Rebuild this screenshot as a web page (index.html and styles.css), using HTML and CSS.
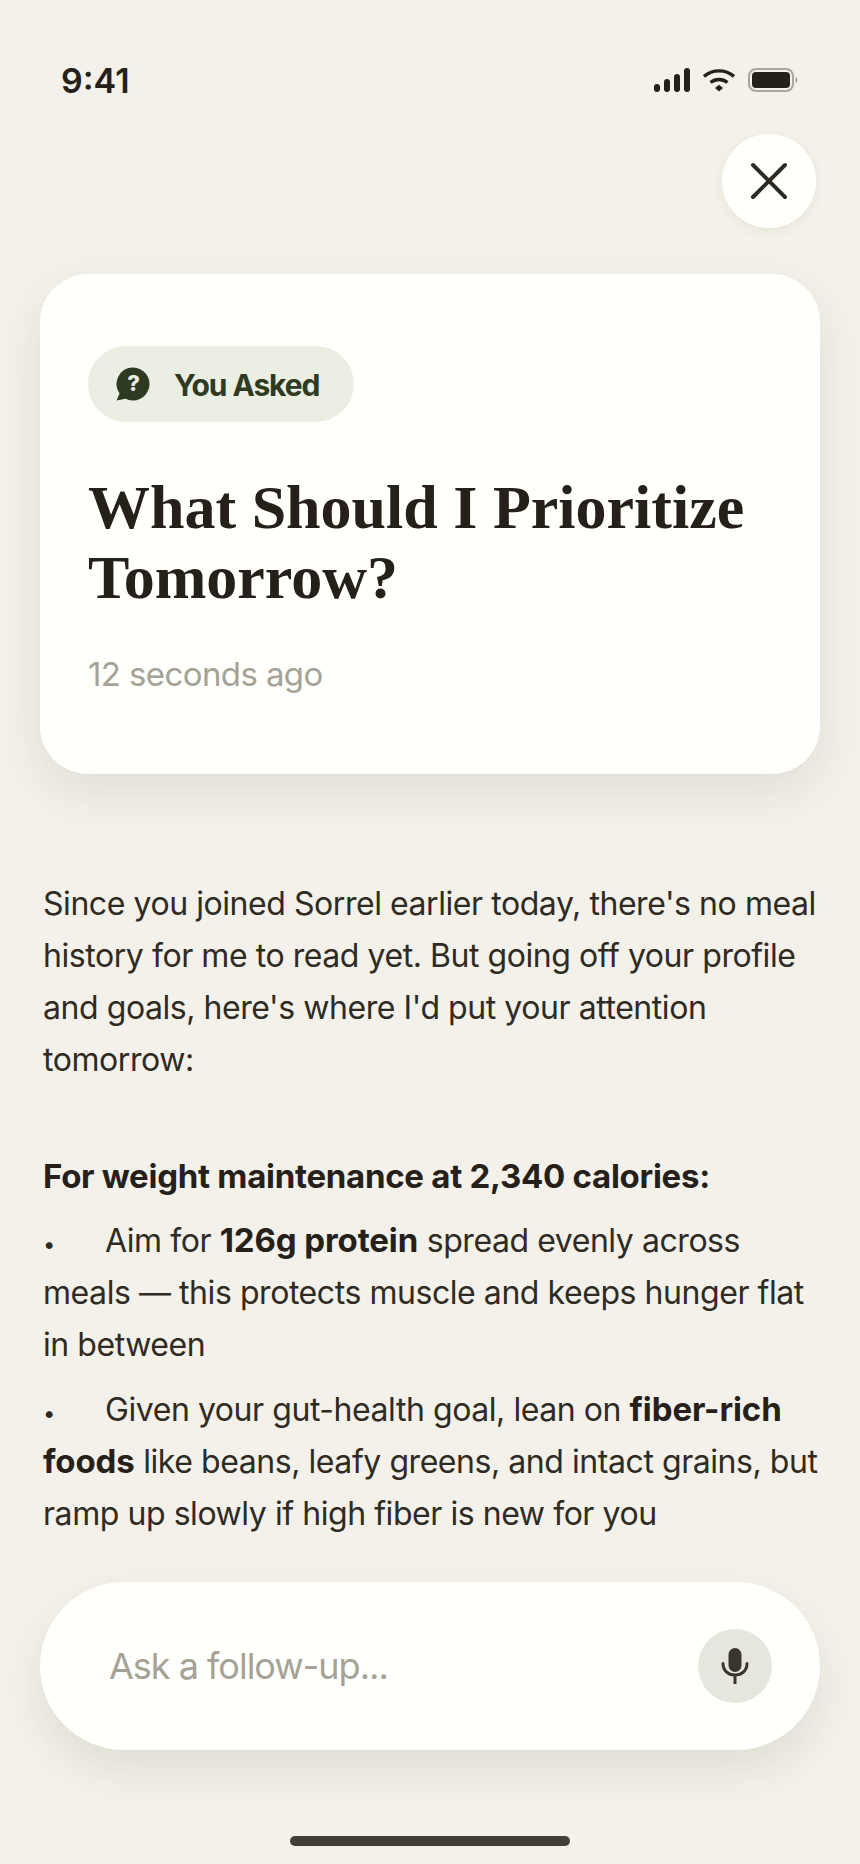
FILE: index.html
```html
<!DOCTYPE html>
<html lang="en">
<head>
  <meta charset="UTF-8" />
  <meta name="viewport" content="width=device-width, initial-scale=1" />
  <title>You Asked</title>
  <link rel="stylesheet" href="styles.css">
</head>
<body>
  <div class="screen">
    <!-- Status bar -->
    <div class="status-bar">
      <span class="time">9:41</span>
      <div class="status-icons">
        <svg class="signal" width="36" height="24" viewBox="0 0 36 24" fill="#25211a">
          <rect x="0" y="16" width="6" height="8" rx="3"/>
          <rect x="10" y="11" width="6" height="13" rx="3"/>
          <rect x="20" y="6" width="6" height="18" rx="3"/>
          <rect x="30" y="0" width="6" height="24" rx="3"/>
        </svg>
        <svg class="wifi" width="32" height="24" viewBox="1 0 32 24" fill="none" stroke="#25211a" stroke-width="3.4">
          <path d="M2 8.500C10.500 1 23.500 1 32 8.500"/>
          <path d="M8.500 14.500C13.500 10.500 20.500 10.500 25.500 14.500"/>
          <path d="M13 20l4-3.200 4 3.200-4 3.500z" fill="#25211a" stroke="none"/>
        </svg>
        <svg class="battery" width="50" height="24" viewBox="0 0 50 24">
          <rect x="1" y="1" width="44" height="22" rx="7" fill="none" stroke="#a9a698" stroke-width="2"/>
          <rect x="4" y="4" width="38" height="16" rx="4" fill="#25211a"/>
          <path d="M47.500 9c1.500.5 2 1.600 2 3s-.5 2.500-2 3z" fill="#a9a698"/>
        </svg>
      </div>
    </div>

    <!-- Close button -->
    <div class="close-row">
      <button class="close-btn" aria-label="Close">
        <svg width="38" height="38" viewBox="0 0 38 38" fill="none" stroke="#2e2b25" stroke-width="4" stroke-linecap="round">
          <path d="M3 3L35 35M35 3L3 35"/>
        </svg>
      </button>
    </div>

    <!-- Question card -->
    <div class="card">
      <div class="chip">
        <svg width="34" height="34" viewBox="0 0 34 34">
          <path d="M17 0.500A16.500 16.500 0 1 1 9.500 31.700L0.500 33.500L3.600 26.500A16.500 16.500 0 0 1 17 0.500Z" fill="#2f3a22"/>
          <text x="17" y="24" text-anchor="middle" class="chip-mark">?</text>
        </svg>
        <span class="chip-label">You Asked</span>
      </div>
      <h1>What Should I Prioritize Tomorrow?</h1>
      <p class="time-ago">12 seconds ago</p>
    </div>

    <!-- Answer -->
    <div class="answer">
      <p>Since you joined Sorrel earlier today, there's no meal history for me to read yet. But going off your profile and goals, here's where I'd put your attention tomorrow:</p>
      <h2>For weight maintenance at 2,340 calories:</h2>
      <p class="bullet"><span class="dot">•</span>Aim for <b>126g protein</b> spread evenly across meals — this protects muscle and keeps hunger flat in between</p>
      <p class="bullet"><span class="dot">•</span>Given your gut-health goal, lean on <b>fiber-rich foods</b> like beans, leafy greens, and intact grains, but ramp up slowly if high fiber is new for you</p>
    </div>

    <!-- Follow-up input -->
    <div class="ask-bar">
      <span class="placeholder">Ask a follow-up...</span>
      <button class="mic-btn" aria-label="Voice">
        <svg width="28" height="36" viewBox="0 0 28 36" fill="none">
          <rect x="7.500" y="0" width="13" height="24" rx="6.500" fill="#3a352c"/>
          <path d="M2 15.500C2 22.500 7 27 14 27s12-4.500 12-11.500M14 27v8" stroke="#3a352c" stroke-width="3" stroke-linecap="round"/>
        </svg>
      </button>
    </div>

    <div class="home-bar"></div>
  </div>
</body>
</html>
```

FILE: styles.css
```css
/* Basic Reset */
* {
  margin: 0;
  padding: 0;
  box-sizing: border-box;
}

body {
  background: #f3f1e9;
  font-family: 'Inter', sans-serif;
  color: #2e2b24;
}

.screen {
  width: 860px;
  height: 1864px;
  display: flex;
  flex-direction: column;
  overflow: hidden;
}

/* Status bar */
.status-bar {
  display: flex;
  align-items: center;
  justify-content: space-between;
  height: 44px;
  margin-top: 58px;
  padding: 0 62px 0 61px;
}

.time {
  font-size: 34px;
  font-weight: 600;
  color: #25211a;
}

.status-icons {
  display: flex;
  align-items: center;
  gap: 13px;
}

/* Close button */
.close-row {
  display: flex;
  justify-content: flex-end;
  padding-right: 44px;
  margin-top: 32px;
}

.close-btn {
  width: 94px;
  height: 94px;
  border: none;
  border-radius: 50%;
  background: #fffffb;
  display: flex;
  align-items: center;
  justify-content: center;
  box-shadow: 0 4px 14px rgba(60, 55, 40, 0.06);
}

/* Question card */
.card {
  width: 780px;
  height: 500px;
  margin: 46px 0 0 40px;
  padding: 72px 48px 0;
  background: #fffffb;
  border-radius: 48px;
  box-shadow: 0 18px 50px rgba(60, 55, 40, 0.1);
}

.chip {
  display: inline-flex;
  align-items: center;
  gap: 24px;
  height: 76px;
  padding: 0 35px 0 28px;
  border-radius: 38px;
  background: #ebeee3;
  color: #2f3a22;
  font-size: 30px;
  font-weight: 700;
  letter-spacing: -1.1px;
}

.chip-label {
  padding-top: 2px;
}

.chip-mark {
  font-family: 'Inter', sans-serif;
  font-size: 22px;
  font-weight: 800;
  fill: #ebeee3;
}

h1 {
  font-family: 'Liberation Serif', serif;
  font-size: 62px;
  font-weight: 700;
  line-height: 70px;
  color: #25211a;
  margin-top: 50px;
}

.time-ago {
  font-size: 33px;
  letter-spacing: -0.6px;
  color: #a5a297;
  margin-top: 42px;
}

/* Answer text */
.answer {
  margin: 104px 0 0 43px;
  width: 780px;
  font-size: 32px;
  line-height: 52px;
  letter-spacing: -0.44px;
}

.answer h2 {
  font-size: 33px;
  font-weight: 700;
  line-height: 52px;
  letter-spacing: -0.28px;
  color: #25211a;
  margin-top: 64px;
}

.answer b {
  font-size: 33px;
  line-height: 0;
  font-weight: 700;
  letter-spacing: -0.1px;
  color: #25211a;
}

.bullet {
  margin-top: 13px;
}

.dot {
  display: inline-block;
  width: 62px;
  font-size: 22px;
  line-height: 0;
}

/* Follow-up input */
.ask-bar {
  display: flex;
  align-items: center;
  justify-content: space-between;
  width: 780px;
  height: 168px;
  margin: auto 0 0 40px;
  padding: 0 48px 0 69px;
  background: #fffffb;
  border-radius: 84px;
  box-shadow: 0 20px 44px rgba(60, 55, 40, 0.1);
}

.placeholder {
  font-size: 36px;
  letter-spacing: -1px;
  color: #a5a297;
}

.mic-btn {
  width: 74px;
  height: 74px;
  border: none;
  border-radius: 50%;
  background: #e7e6de;
  display: flex;
  align-items: center;
  justify-content: center;
}

.home-bar {
  width: 280px;
  height: 10px;
  border-radius: 5px;
  background: #433f37;
  margin: 86px 0 18px 290px;
}
```
